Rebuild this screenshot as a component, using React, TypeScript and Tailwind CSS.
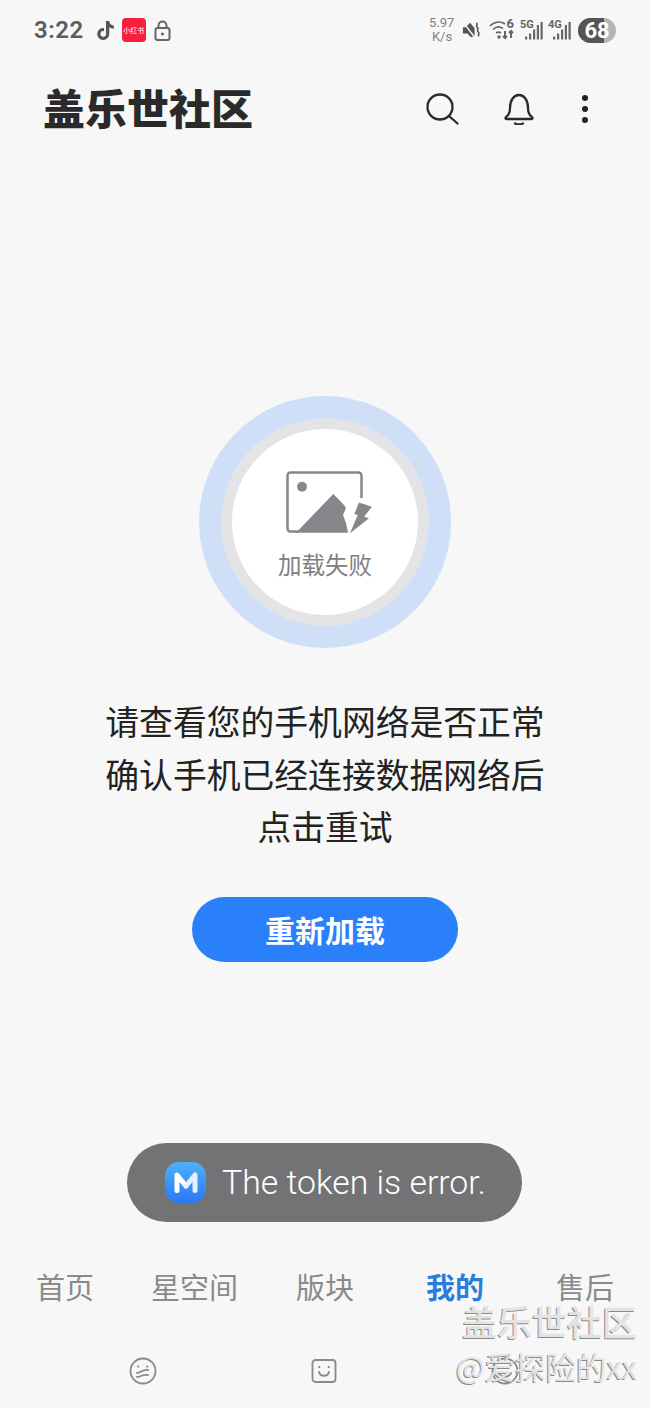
import { FaTiktok } from "react-icons/fa6";

const sans = "font-['Roboto','Noto_Sans_CJK_SC',sans-serif]";
const cjk = "font-['Noto_Sans_CJK_SC',sans-serif]";

function SignalBars({ label }: { label: string }) {
  return (
    <div className="relative w-[23px] h-[20px]">
      <span className={`absolute left-0 -top-[1px] text-[11px] leading-[12px] font-bold text-[#666] ${sans}`}>{label}</span>
      <svg viewBox="0 0 23 20" className="absolute inset-0 w-[23px] h-[20px]" fill="#666">
        <rect x="5" y="16.500" width="2.200" height="3" />
        <rect x="9" y="13.500" width="2.200" height="6" />
        <rect x="13" y="9.500" width="2.200" height="10" />
        <rect x="16.800" y="5" width="2.200" height="14.500" />
        <rect x="20.500" y="2" width="2.200" height="17.500" />
      </svg>
    </div>
  );
}

function StatusBar() {
  return (
    <div className="h-[60px] pl-[34px] pr-[34px] flex items-center justify-between">
      <div className="flex items-center">
        <span className={`text-[24px] font-semibold text-[#5c5c5c] tracking-[0.5px] ${sans}`}>3:22</span>
        <FaTiktok className="ml-[13px] w-[17px] h-[19px] text-[#555]" />
        <div className="ml-[8px] w-[24px] h-[24px] rounded-[4px] bg-[#f5203e] flex items-center justify-center">
          <span className={`text-[7px] leading-none text-white whitespace-nowrap ${cjk}`}>小红书</span>
        </div>
        <svg viewBox="0 0 17 21" className="ml-[8px] w-[17px] h-[21px]" fill="none" stroke="#666" strokeWidth="2">
          <path d="M4.500 8V5.500a4 4 0 0 1 8 0V8" />
          <rect x="1.500" y="8" width="14" height="12" rx="2" />
          <circle cx="8.500" cy="14" r="1.600" fill="#666" stroke="none" />
        </svg>
      </div>
      <div className="flex items-center">
        <div className={`w-[24px] text-center text-[13px] leading-[14px] text-[#808080] whitespace-nowrap ${sans}`}>
          <div className="-ml-[1px]">5.97</div>
          <div>K/s</div>
        </div>
        <svg viewBox="0 0 20 20" className="ml-[8px] w-[18px] h-[18px]" fill="#555">
          <path d="M1 7h3l5-5 5 6v9l-4 1-4-4H1z" />
          <path d="M1 1l13 17" stroke="#f7f7f7" strokeWidth="1.600" />
          <path d="M16 2c2 2-1 3 1 5s-1 3 1 5-1 3 1 5" fill="none" stroke="#555" strokeWidth="1.800" />
        </svg>
        <div className="ml-[9px] relative w-[26px] h-[20px]">
          <svg viewBox="0 0 26 20" className="w-[26px] h-[20px]" fill="none" stroke="#666" strokeWidth="1.600">
            <path d="M1 6c5-5 11-5 15-2" />
            <path d="M4 9.500c3-3 7-3 10-1" />
            <path d="M7 13c2-1.500 3-1.500 5 0" />
            <circle cx="10" cy="17" r="1" fill="#666" />
            <path d="M16 11v7M14 16l2 2 2-2M22 18v-7M20 13l2-2 2 2" strokeWidth="2" />
          </svg>
          <span className={`absolute right-[1px] -top-[3px] text-[13px] leading-[14px] font-bold text-[#666] ${sans}`}>6</span>
        </div>
        <div className="ml-[5px]"><SignalBars label="5G" /></div>
        <div className="ml-[5px]"><SignalBars label="4G" /></div>
        <div className="ml-[7px] relative w-[38px] h-[25px] rounded-full overflow-hidden bg-[#b5b5b5]">
          <div className="w-[26px] h-full bg-[#555]" />
          <span className={`absolute inset-0 flex items-center justify-center text-[22px] font-bold text-white ${sans}`}>68</span>
        </div>
      </div>
    </div>
  );
}

function Header() {
  return (
    <div className="h-[98px] pl-[43px] flex items-center">
      <h1 className={`mb-[5px] text-[42px] leading-none font-black text-[#2a2a2a] ${cjk}`}>盖乐世社区</h1>
      <svg viewBox="0 0 33 32" className="ml-[173px] w-[33px] h-[32px]" fill="none" stroke="#2a2a2a" strokeWidth="2.300" strokeLinecap="round">
        <circle cx="14" cy="14" r="12.500" />
        <path d="M23 23l8.500 7.500" />
      </svg>
      <svg viewBox="0 0 30 32" className="ml-[45px] w-[30px] h-[32px]" fill="none" stroke="#2a2a2a" strokeWidth="2.300" strokeLinecap="round" strokeLinejoin="round">
        <path d="M2 24c3-2 4-4 4-9 0-8 4-13 9-13s9 5 9 13c0 5 1 7 4 9 1 1 .5 2-1 2H3c-1.500 0-2-1-1-2z" />
        <path d="M11 30.500c2 1 6 1 8 0" />
      </svg>
      <div className="ml-[48px] flex flex-col gap-[5.500px]">
        <div className="w-[5.500px] h-[5.500px] rounded-full bg-[#222]" />
        <div className="w-[5.500px] h-[5.500px] rounded-full bg-[#222]" />
        <div className="w-[5.500px] h-[5.500px] rounded-full bg-[#222]" />
      </div>
    </div>
  );
}

function BrokenImage() {
  return (
    <svg viewBox="0 0 87 63" className="ml-[9px] w-[87px] h-[63px]">
      <path d="M75.500 27V4.500a3 3 0 0 0-3-3H4.500a3 3 0 0 0-3 3v53a3 3 0 0 0 3 3H12" fill="none" stroke="#87868a" strokeWidth="2.500" />
      <circle cx="16" cy="15.700" r="5" fill="#87868a" />
      <path d="M47.300 23L58 34l2 3-3 7 3 8 2 9.700H10z" fill="#87868a" />
      <path d="M73 31.600l13 4.100-8 10 5 1.600-19 15 7.700-18.300-3.400-1z" fill="#87868a" />
    </svg>
  );
}

function LoadError() {
  return (
    <div className="flex flex-col items-center pt-[238px]">
      <div className="w-[252px] h-[252px] rounded-full bg-[#cfdff8] flex items-center justify-center">
        <div className="w-[208px] h-[208px] rounded-full bg-[#e4e4e6] flex items-center justify-center">
          <div className="w-[186px] h-[186px] rounded-full bg-white flex flex-col items-center pt-[42px]">
            <BrokenImage />
            <span className={`mt-[14px] text-[23.500px] leading-[32px] text-[#808080] ${cjk}`}>加载失败</span>
          </div>
        </div>
      </div>
      <div className={`mt-[47px] text-center text-[33.800px] leading-[52.500px] text-[#222] ${cjk}`}>
        <p>请查看您的手机网络是否正常</p>
        <p>确认手机已经连接数据网络后</p>
        <p>点击重试</p>
      </div>
      <button className={`mt-[44px] w-[266px] h-[65px] rounded-full bg-[#2a80fa] text-white text-[30px] font-bold ${cjk}`}>
        重新加载
      </button>
    </div>
  );
}

function TabLabels() {
  return (
    <div className={`flex items-center pl-[36px] h-[52px] text-[29px] leading-[44px] text-[#8a8a8a] ${cjk}`}>
      <span>首页</span>
      <span className="ml-[57px]">星空间</span>
      <span className="ml-[58px]">版块</span>
      <span className="ml-[72px] font-bold text-[#2a7ddb]">我的</span>
      <span className="ml-[72px]">售后</span>
    </div>
  );
}

function BottomNav() {
  return (
    <div className="mt-auto h-[148px]">
      <TabLabels />
      <div className="mt-[45px] pl-[129px] flex items-center">
        <svg viewBox="0 0 28 28" className="w-[28px] h-[28px]" fill="none" stroke="#8a8a8a" strokeWidth="1.800" strokeLinecap="round">
          <circle cx="14" cy="14" r="12.500" />
          <path d="M9 9.500h.5M18 9.500h.5M8 16c4 0 5-4 11-3M8 20c4 0 5-3 11-2" />
        </svg>
        <svg viewBox="0 0 26 26" className="ml-[154px] w-[26px] h-[26px]" fill="none" stroke="#8a8a8a" strokeWidth="1.800" strokeLinecap="round">
          <rect x="1.500" y="2" width="23" height="22" rx="3" />
          <path d="M8 9h.5M17.500 9h.5M8 14c1 5 9 5 10 0" />
        </svg>
        <svg viewBox="0 0 28 28" className="ml-[154px] w-[28px] h-[28px]" fill="none" stroke="#8a8a8a" strokeWidth="1.800" strokeLinecap="round">
          <circle cx="14" cy="14" r="12.500" />
          <path d="M9 10h.5M18 10h.5M8 16c2 5 10 5 12 0" />
        </svg>
      </div>
    </div>
  );
}

export default function App() {
  return (
    <div className="relative w-[650px] h-[1408px] overflow-hidden flex flex-col bg-[#f7f7f7]">
      <StatusBar />
      <Header />
      <LoadError />
      <BottomNav />

      {/* toast */}
      <div className="absolute left-[127px] top-[1143px] w-[395px] h-[79px] rounded-full bg-[#737376] flex items-center pl-[38px]">
        <div className="w-[41px] h-[41px] rounded-[14px] bg-gradient-to-b from-[#4fb0fa] to-[#2a78f5] flex items-center justify-center">
          <svg viewBox="0 0 24 21" className="w-[24px] h-[21px]" fill="none" strokeLinecap="round" strokeLinejoin="round">
            <path d="M3 18.500V3l9 11" stroke="white" strokeWidth="5" />
            <path d="M12 14l9-11v15.500" stroke="#e4f0ff" strokeWidth="5" />
          </svg>
        </div>
        <span className={`ml-[16px] mt-[1px] text-[33.800px] leading-none font-light text-white whitespace-nowrap ${sans}`}>The token is error.</span>
      </div>

      {/* watermark */}
      <div className="absolute right-[13px] top-[1298px] flex flex-col items-end pointer-events-none">
        <span className={`text-[35px] leading-[46px] font-medium text-[#e3e3e3] [text-shadow:-1px_1px_0_#8a8a8a] ${cjk}`}>盖乐世社区</span>
        <span className={`text-[30.500px] leading-[44px] text-[#e3e3e3] [text-shadow:-1px_1px_0_#8a8a8a] ${cjk}`}>@爱探险的xx</span>
      </div>
    </div>
  );
}
